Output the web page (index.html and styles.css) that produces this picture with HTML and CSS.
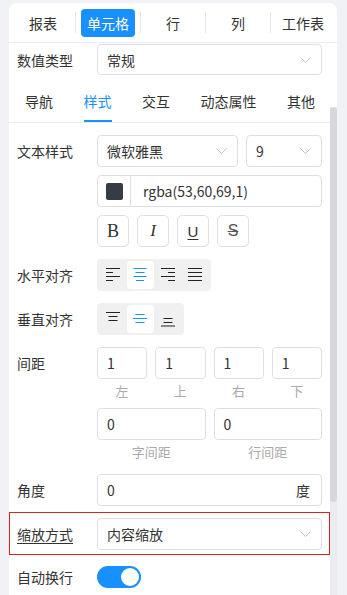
FILE: index.html
```html
<!DOCTYPE html>
<html lang="zh-CN">
<head>
  <meta charset="UTF-8">
  <meta name="viewport" content="width=device-width, initial-scale=1.0">
  <title>单元格属性</title>
  <link rel="stylesheet" href="styles.css">
</head>
<body>
  <div class="panel">
    <div class="tabs">
      <div class="tab">报表</div>
      <div class="sep"></div>
      <div class="tab active"><span>单元格</span></div>
      <div class="sep"></div>
      <div class="tab">行</div>
      <div class="sep"></div>
      <div class="tab">列</div>
      <div class="sep"></div>
      <div class="tab">工作表</div>
    </div>

    <div class="main">
      <div class="content">
        <div class="row first">
          <div class="label">数值类型</div>
          <div class="ctrl">
            <div class="select h31">常规
              <svg class="chev" width="11" height="6" viewBox="0 0 11 6"><path d="M0.5 0.5 L5.5 5.5 L10.5 0.5" fill="none" stroke="#c0c4cc" stroke-width="1"/></svg>
            </div>
          </div>
        </div>

        <div class="subtabs">
          <div class="subtab">导航</div>
          <div class="subtab active">样式</div>
          <div class="subtab">交互</div>
          <div class="subtab">动态属性</div>
          <div class="subtab">其他</div>
        </div>

        <div class="row">
          <div class="label">文本样式</div>
          <div class="ctrl stack">
            <div class="line">
              <div class="select grow">微软雅黑
                <svg class="chev" width="11" height="6" viewBox="0 0 11 6"><path d="M0.5 0.5 L5.5 5.5 L10.5 0.5" fill="none" stroke="#c0c4cc" stroke-width="1"/></svg>
              </div>
              <div class="select size">9
                <svg class="chev" width="11" height="6" viewBox="0 0 11 6"><path d="M0.5 0.5 L5.5 5.5 L10.5 0.5" fill="none" stroke="#c0c4cc" stroke-width="1"/></svg>
              </div>
            </div>
            <div class="color">
              <div class="swatch-cell"><div class="swatch"></div></div>
              <div class="color-text">rgba(53,60,69,1)</div>
            </div>
            <div class="line">
              <div class="fbtn bold">B</div>
              <div class="fbtn italic">I</div>
              <div class="fbtn under">U</div>
              <div class="fbtn strike">S</div>
            </div>
          </div>
        </div>

        <div class="row">
          <div class="label">水平对齐</div>
          <div class="ctrl">
            <div class="seg">
              <div class="segbtn">
                <svg width="14" height="16" viewBox="0 0 14 16"><g stroke="#222" stroke-width="1.2"><path d="M0 1.5h14M0 5.5h7M0 9.5h14M0 13.5h7"/></g></svg>
              </div>
              <div class="segbtn on">
                <svg width="14" height="16" viewBox="0 0 14 16"><g stroke="#1890ff" stroke-width="1.2"><path d="M0.5 1.5h13M2.5 5.5h9M0.5 9.5h13M3 13.5h8"/></g></svg>
              </div>
              <div class="segbtn">
                <svg width="14" height="16" viewBox="0 0 14 16"><g stroke="#222" stroke-width="1.2"><path d="M0 1.5h14M7 5.5h7M0 9.5h14M7 13.5h7"/></g></svg>
              </div>
              <div class="segbtn">
                <svg width="14" height="16" viewBox="0 0 14 16"><g stroke="#222" stroke-width="1.2"><path d="M0 1.5h14M0 5.5h14M0 9.5h14M0 13.5h14"/></g></svg>
              </div>
            </div>
          </div>
        </div>

        <div class="row">
          <div class="label">垂直对齐</div>
          <div class="ctrl">
            <div class="seg">
              <div class="segbtn">
                <svg width="14" height="16" viewBox="0 0 14 16"><g stroke="#222" stroke-width="1.2"><path d="M0 1.5h14M2.5 5.5h9M2.5 9.5h9"/></g></svg>
              </div>
              <div class="segbtn on">
                <svg width="14" height="16" viewBox="0 0 14 16"><g stroke="#1890ff" stroke-width="1.2"><path d="M2.5 3.5h9M0 7.5h14M2.5 11.5h9"/></g></svg>
              </div>
              <div class="segbtn">
                <svg width="14" height="16" viewBox="0 0 14 16"><g stroke="#222" stroke-width="1.2"><path d="M2.5 7.5h9M2.5 11.5h9M0 15h14"/></g></svg>
              </div>
            </div>
          </div>
        </div>

        <div class="row">
          <div class="label">间距</div>
          <div class="ctrl">
            <div class="grid4">
              <div class="input">1</div>
              <div class="input">1</div>
              <div class="input">1</div>
              <div class="input">1</div>
              <div class="hint">左</div>
              <div class="hint">上</div>
              <div class="hint">右</div>
              <div class="hint">下</div>
              <div class="input wide gap-top">0</div>
              <div class="input wide gap-top">0</div>
              <div class="hint wide">字间距</div>
              <div class="hint wide">行间距</div>
            </div>
          </div>
        </div>

        <div class="row angle">
          <div class="label">角度</div>
          <div class="ctrl">
            <div class="input unit"><span>0</span><span>度</span></div>
          </div>
        </div>

        <div class="row hl">
          <div class="label"><span class="ul">缩放方式</span></div>
          <div class="ctrl">
            <div class="select">内容缩放
              <svg class="chev" width="11" height="6" viewBox="0 0 11 6"><path d="M0.5 0.5 L5.5 5.5 L10.5 0.5" fill="none" stroke="#c0c4cc" stroke-width="1"/></svg>
            </div>
          </div>
        </div>

        <div class="row wrap">
          <div class="label">自动换行</div>
          <div class="ctrl">
            <div class="switch"><div class="knob"></div></div>
          </div>
        </div>
      </div>

      <div class="scrollbar">
        <div class="thumb"></div>
      </div>
    </div>
  </div>
</body>
</html>
```

FILE: styles.css
```css
body {
  margin: 0;
  background: #f0f2f5;
  font-family: "Noto Sans CJK SC", "Noto Sans", sans-serif;
  font-size: 14px;
  color: #333;
  overflow: hidden;
}

.panel {
  margin: 3px 0 0 9px;
  width: 328px;
  height: 592px;
  background: #fff;
  border-radius: 8px 8px 0 0;
  display: flex;
  flex-direction: column;
  overflow: hidden;
}

/* top tabs */
.tabs {
  display: flex;
  align-items: center;
  height: 39px;
  padding: 0 2px;
  border-bottom: 1px solid #ebedf0;
  flex-shrink: 0;
}

.tab {
  flex: 1;
  text-align: center;
  line-height: 28px;
}

.tab.active span {
  display: inline-block;
  padding: 0 6px;
  background: #1890ff;
  color: #fff;
  border-radius: 4px;
}

.sep {
  width: 1px;
  height: 21px;
  background: #e6e8eb;
}

.main {
  flex: 1;
  display: flex;
  min-height: 0;
}

.content {
  flex: 1;
  padding: 0 8px;
}

.scrollbar {
  width: 7px;
  margin-top: 64px;
  background: #eaecef;
}

.thumb {
  height: 395px;
  background: #d6d8dc;
  border-radius: 4px;
}

/* form rows */
.row {
  display: flex;
  margin-top: 12px;
}

.row.first {
  margin-top: 1px;
}

.label {
  width: 80px;
  flex-shrink: 0;
  line-height: 32px;
}

.ctrl {
  flex: 1;
  min-width: 0;
}

.stack {
  display: flex;
  flex-direction: column;
  gap: 8px;
}

.line {
  display: flex;
  gap: 8px;
}

.select, .input {
  box-sizing: border-box;
  height: 32px;
  border: 1px solid #dcdfe6;
  border-radius: 4px;
  padding: 0 10px 0 9px;
  display: flex;
  align-items: center;
  justify-content: space-between;
}

.select.h31 {
  height: 31px;
}

.select.grow {
  flex: 1;
}

.select.size {
  width: 76px;
  flex-shrink: 0;
}

.chev {
  display: block;
}

/* sub tabs */
.subtabs {
  display: flex;
  justify-content: space-between;
  margin: 5px -8px 0;
  padding: 0 15px 0 16px;
  height: 41px;
  border-bottom: 1px solid #ebedf0;
}

.subtab {
  line-height: 41px;
}

.subtab.active {
  color: #1890ff;
  box-shadow: inset 0 -2px 0 #1890ff;
}

/* color input */
.color {
  display: flex;
  height: 32px;
  box-sizing: border-box;
  border: 1px solid #dcdfe6;
  border-radius: 4px;
}

.swatch-cell {
  width: 32px;
  border-right: 1px solid #dcdfe6;
  display: flex;
  align-items: center;
  justify-content: center;
}

.swatch {
  width: 17px;
  height: 17px;
  background: #353c45;
  border-radius: 2px;
}

.color-text {
  padding-left: 12px;
  line-height: 30px;
}

/* font buttons */
.fbtn {
  width: 32px;
  height: 32px;
  box-sizing: border-box;
  border: 1px solid #dcdfe6;
  border-radius: 5px;
  display: flex;
  align-items: center;
  justify-content: center;
  color: #333;
  font-family: "Liberation Serif", serif;
  font-size: 18px;
}

.fbtn.italic {
  font-style: italic;
  font-size: 17px;
}

.fbtn.under {
  font-family: "Liberation Sans", sans-serif;
  font-size: 15px;
  text-decoration: underline;
  text-underline-offset: 2px;
}

.fbtn.strike {
  font-family: "Liberation Sans", sans-serif;
  font-size: 16px;
  text-decoration: line-through;
  color: #555;
}

/* segmented align buttons */
.seg {
  display: inline-flex;
  padding: 2px;
  background: #f0f0f0;
  border-radius: 4px;
}

.segbtn {
  width: 27.5px;
  height: 28px;
  display: flex;
  align-items: center;
  justify-content: center;
  border-radius: 4px;
}

.segbtn.on {
  background: #fff;
}

.segbtn svg {
  display: block;
}

/* spacing grid */
.grid4 {
  display: grid;
  grid-template-columns: repeat(4, 1fr);
  column-gap: 8px;
}

.grid4 .wide {
  grid-column: span 2;
}

.hint {
  text-align: center;
  font-size: 13px;
  line-height: 24px;
  color: #aaa;
}

.gap-top {
  margin-top: 5px;
}

.row.angle {
  margin-top: 10px;
}

.input.unit {
  padding-right: 11px;
}

/* highlighted row */
.row.hl {
  margin: 6px -8px 0;
  padding: 5px 7px 4px;
  border: 1px solid #e02020;
}

.ul {
  text-decoration: underline;
  text-underline-offset: 3px;
}

.row.wrap {
  margin-top: 11px;
}

.row.wrap .label {
  line-height: 22px;
}

.switch {
  width: 44px;
  height: 22px;
  border-radius: 11px;
  background: #1890ff;
  display: flex;
  justify-content: flex-end;
  align-items: center;
  padding: 0 2px;
  box-sizing: border-box;
}

.knob {
  width: 18px;
  height: 18px;
  border-radius: 50%;
  background: #fff;
}
```
